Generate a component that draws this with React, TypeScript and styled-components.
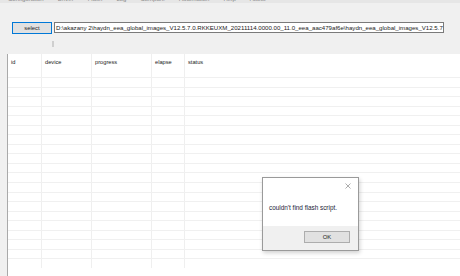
import React from "react";
import styled, { createGlobalStyle } from "styled-components";

const GlobalStyle = createGlobalStyle`
  html, body {
    margin: 0;
    padding: 0;
    background: #f0f0f0;
  }
  body {
    font-family: "Liberation Sans", Arial, sans-serif;
    color: #222;
  }
`;

const columns = [
  { key: "id", label: "id", width: 34 },
  { key: "device", label: "device", width: 50 },
  { key: "progress", label: "progress", width: 60 },
  { key: "elapse", label: "elapse", width: 33 },
  { key: "status", label: "status", width: 0 },
];

const menuItems = ["Configuration", "Driver", "Flash", "Log", "Compare", "Automation", "Help", "About"];

const ROW_COUNT = 20;

const Window = styled.div`
  position: relative;
  width: 460px;
  height: 276px;
  overflow: hidden;
  background: #f0f0f0;
  display: flex;
  flex-direction: column;
`;

// tab strip of the parent window, only its lower edge is on screen
const MenuStrip = styled.div`
  height: 3px;
  overflow: hidden;
  background: #e6e6e6;
  display: flex;
  gap: 14px;
  padding-left: 8px;
  font-size: 6px;
  color: #8a8a8a;
  span {
    margin-top: -4px;
    line-height: 7px;
  }
`;

const Toolbar = styled.div`
  display: flex;
  align-items: flex-start;
  gap: 2px;
  padding: 19px 0 0 12px;
  height: 12px;
`;

const SelectButton = styled.button`
  width: 40px;
  height: 12px;
  padding: 0;
  border: 1px solid #0078d7;
  background: #e1e1e1;
  font-family: "Liberation Sans", Arial, sans-serif;
  font-size: 5.9px;
  color: #222;
  line-height: 10px;
`;

const PathBox = styled.div`
  width: 390px;
  height: 11px;
  box-sizing: border-box;
  border: 1px solid #7a7a7a;
  background: #fff;
  overflow: hidden;
  white-space: nowrap;
  font-size: 6.1px;
  line-height: 9px;
  padding-left: 1px;
  color: #222;
`;

const StatusRow = styled.div`
  height: 20px;
  display: flex;
  padding: 7px 0 0 52px;
  box-sizing: border-box;
`;

const Tick = styled.div`
  width: 2px;
  height: 6px;
  background: #cfcfcf;
`;

const ListView = styled.div`
  flex: 1;
  margin-left: 7px;
  border-left: 1px solid #a9a9a9;
  background: #fff;
  display: flex;
  flex-direction: column;
`;

const HeaderRow = styled.div`
  display: flex;
  height: 23px;
  box-sizing: border-box;
`;

const Row = styled.div`
  display: flex;
  height: 9.55px;
  flex: none;
  border-top: 1px solid #f0f0f0;
  box-sizing: border-box;
`;

const Cell = styled.div<{ $width: number; $header?: boolean }>`
  ${(p) => (p.$width ? `width: ${p.$width}px; flex: none;` : "flex: 1;")}
  box-sizing: border-box;
  border-right: ${(p) => (p.$width ? "1px solid #efefef" : "none")};
  font-size: 5.7px;
  color: #222;
  padding: ${(p) => (p.$header ? "5px 0 0 3px" : "0")};
  line-height: 7px;
`;

const Dialog = styled.div`
  position: absolute;
  left: 262px;
  top: 177px;
  width: 97px;
  height: 74px;
  box-sizing: border-box;
  border: 1px solid #9a9a9a;
  background: #fff;
  box-shadow: 1px 2px 4px rgba(0, 0, 0, 0.18);
  display: flex;
  flex-direction: column;
`;

const DialogBody = styled.div`
  flex: 1;
  display: flex;
  flex-direction: column;
  padding: 4px 6px 0 6px;
`;

const CloseButton = styled.div`
  align-self: flex-end;
  width: 8px;
  height: 8px;
  display: flex;
  align-items: center;
  justify-content: center;
`;

const Message = styled.div`
  margin-top: 14px;
  font-size: 6.4px;
  color: #1c1c38;
  white-space: nowrap;
`;

const DialogFooter = styled.div`
  height: 24px;
  background: #f0f0f0;
  display: flex;
  justify-content: flex-end;
  padding: 5px 8px 0 0;
  box-sizing: border-box;
`;

const OkButton = styled.button`
  width: 46px;
  height: 12px;
  padding: 0;
  border: 1px solid #adadad;
  background: #e1e1e1;
  font-family: "Liberation Sans", Arial, sans-serif;
  font-size: 5.9px;
  color: #222;
  line-height: 10px;
`;

const App = () => {
  const path =
    "D:\\akazany 2\\haydn_eea_global_images_V12.5.7.0.RKKEUXM_20211114.0000.00_11.0_eea_aac479af6e\\haydn_eea_global_images_V12.5.7.0.RKKEUXM_20211114";

  return (
    <Window>
      <GlobalStyle />
      <MenuStrip>
        {menuItems.map((m) => (
          <span key={m}>{m}</span>
        ))}
      </MenuStrip>
      <Toolbar>
        <SelectButton>select</SelectButton>
        <PathBox>{path}</PathBox>
      </Toolbar>
      <StatusRow>
        <Tick />
      </StatusRow>
      <ListView>
        <HeaderRow>
          {columns.map((c) => (
            <Cell key={c.key} $width={c.width} $header>
              {c.label}
            </Cell>
          ))}
        </HeaderRow>
        {Array.from({ length: ROW_COUNT }).map((_, i) => (
          <Row key={i}>
            {columns.map((c) => (
              <Cell key={c.key} $width={c.width} />
            ))}
          </Row>
        ))}
      </ListView>
      <Dialog>
        <DialogBody>
          <CloseButton>
            <svg width="6" height="6" viewBox="0 0 6 6">
              <path d="M0.5 0.5 L5.5 5.5 M5.5 0.5 L0.5 5.5" stroke="#8a8a8a" strokeWidth="0.7" fill="none" />
            </svg>
          </CloseButton>
          <Message>couldn't find flash script.</Message>
        </DialogBody>
        <DialogFooter>
          <OkButton>OK</OkButton>
        </DialogFooter>
      </Dialog>
    </Window>
  );
};

export default App;
